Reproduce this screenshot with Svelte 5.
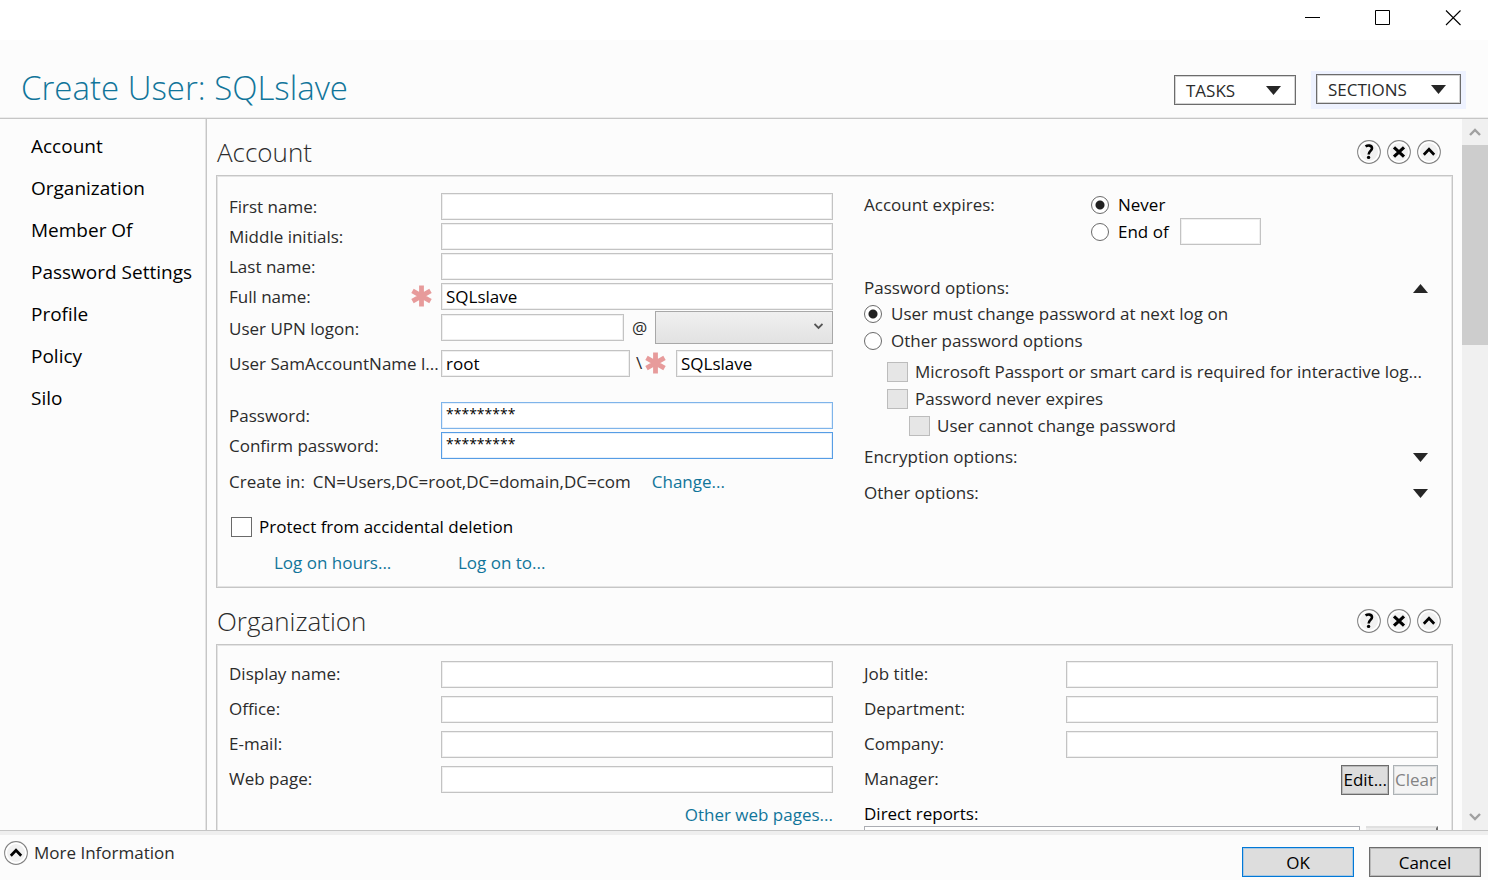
<script>
	const sections = ['Account', 'Organization', 'Member Of', 'Password Settings', 'Profile', 'Policy', 'Silo'];

	const nameFields = [
		{ id: 'first-name', label: 'First name:', value: '' },
		{ id: 'middle-initials', label: 'Middle initials:', value: '' },
		{ id: 'last-name', label: 'Last name:', value: '' },
		{ id: 'full-name', label: 'Full name:', value: 'SQLslave', required: true }
	];

	const passwordFields = [
		{ id: 'password', label: 'Password:' },
		{ id: 'confirm-password', label: 'Confirm password:', focused: true }
	];

	const orgLeft = ['Display name:', 'Office:', 'E-mail:', 'Web page:'];
	const orgRight = ['Job title:', 'Department:', 'Company:'];

	let expires = $state('never');
	let passwordMode = $state('change');
	let protect = $state(false);
</script>

{#snippet star()}
	<svg class="star" width="21" height="22" viewBox="0 0 21 22" aria-hidden="true">
		<path d="M10.5 0.5V21.5M1.5 5.8L19.5 16.2M19.5 5.8L1.5 16.2" stroke="#e79b9b" stroke-width="4.8" />
	</svg>
{/snippet}

{#snippet triangle(up)}
	<svg width="15" height="9" viewBox="0 0 15 9" aria-hidden="true">
		<path d={up ? 'M0 9L7.5 0L15 9Z' : 'M0 0H15L7.5 9Z'} fill="#262626" />
	</svg>
{/snippet}

{#snippet roundIcon(kind)}
	<svg width="24" height="24" viewBox="0 0 24 24" aria-hidden="true">
		<circle cx="12" cy="12" r="11.3" fill="#f1f1f1" stroke="#858585" stroke-width="1.2" />
		<circle cx="12" cy="12" r="9.8" fill="none" stroke="#fff" stroke-width="1.6" />
		{#if kind === 'help'}
			<path d="M8.6 6.6C10.6 5 15 5 15 8.3C15 10.8 11.7 11 11.7 14.4" fill="none" stroke="#000" stroke-width="2.6" />
			<circle cx="11.6" cy="17.4" r="1.7" />
		{:else if kind === 'close'}
			<path d="M7 7.3L17 16.7M17 7.3L7 16.7" stroke="#000" stroke-width="3.1" />
		{:else}
			<path d="M6.8 14.8L12 9.3L17.2 14.8" fill="none" stroke="#000" stroke-width="2.7" />
		{/if}
	</svg>
{/snippet}

{#snippet sectionHead(title)}
	<header class="section-head">
		<h2>{title}</h2>
		<div class="section-tools">
			<button class="round" aria-label="Help">{@render roundIcon('help')}</button>
			<button class="round" aria-label="Close {title}">{@render roundIcon('close')}</button>
			<button class="round" aria-label="Collapse {title}">{@render roundIcon('up')}</button>
		</div>
	</header>
{/snippet}

<div class="window">
	<div class="titlebar">
		<button aria-label="Minimize">
			<svg width="16" height="16" viewBox="0 0 16 16"><path d="M0 7.5H15" stroke="#000" /></svg>
		</button>
		<button aria-label="Maximize">
			<svg width="16" height="16" viewBox="0 0 16 16"><path d="M0.5 0.5H14.5V14.5H0.5Z" fill="none" stroke="#000" /></svg>
		</button>
		<button aria-label="Close">
			<svg width="16" height="16" viewBox="0 0 16 16"><path d="M1 0.5L15.5 15M15.5 0.5L1 15" stroke="#000" stroke-width="1.1" /></svg>
		</button>
	</div>

	<header class="page-head">
		<h1>Create User: SQLslave</h1>
		<button class="menu tasks">TASKS {@render triangle(false)}</button>
		<div class="halo">
			<button class="menu sections">SECTIONS {@render triangle(false)}</button>
		</div>
	</header>

	<div class="body">
		<nav>
			{#each sections as section}
				<a href="#{section}">{section}</a>
			{/each}
		</nav>

		<main>
			<section>
				{@render sectionHead('Account')}
				<div class="panel">
					<div class="column">
						{#each nameFields as field}
							<div class="row">
								<label for={field.id}>
									{field.label}
									{#if field.required}{@render star()}{/if}
								</label>
								<input class="text" type="text" id={field.id} value={field.value} />
							</div>
						{/each}
						<div class="row upn">
							<label for="upn">User UPN logon:</label>
							<input class="text" type="text" id="upn" />
							<span class="at">@</span>
							<div class="select">
								<select aria-label="UPN suffix"><option></option></select>
								<svg width="9" height="7" viewBox="0 0 9 7" aria-hidden="true">
									<path d="M0.5 1L4.5 5L8.5 1" fill="none" stroke="#555" stroke-width="1.8" />
								</svg>
							</div>
						</div>
						<div class="row sam">
							<label for="sam">User SamAccountName l...</label>
							<input class="text" type="text" id="sam" value="root" />
							<span class="slash">\</span>
							{@render star()}
							<input class="text sam-name" type="text" aria-label="SamAccountName" value="SQLslave" />
						</div>
						<div class="passwords">
							{#each passwordFields as field}
								<div class="row">
									<label for={field.id}>{field.label}</label>
									<input class="text secret" class:focused={field.focused} type="text" id={field.id} value="*********" />
								</div>
							{/each}
						</div>
						<div class="create-in">
							<span>Create in:</span>
							<span>CN=Users,DC=root,DC=domain,DC=com</span>
							<a href="#change">Change...</a>
						</div>
						<label class="choice protect">
							<input type="checkbox" bind:checked={protect} />
							Protect from accidental deletion
						</label>
						<div class="logon-links">
							<a href="#hours">Log on hours...</a>
							<a href="#computers">Log on to...</a>
						</div>
					</div>

					<div class="column">
						<div class="expires">
							<span>Account expires:</span>
							<div>
								<label class="choice dark">
									<input type="radio" name="expires" value="never" bind:group={expires} />
									Never
								</label>
								<div class="end-of">
									<label class="choice dark">
										<input type="radio" name="expires" value="end" bind:group={expires} />
										End of
									</label>
									<input class="text" type="text" aria-label="Expiry date" />
								</div>
							</div>
						</div>
						<button class="expander open">Password options: {@render triangle(true)}</button>
						<label class="choice">
							<input type="radio" name="mode" value="change" bind:group={passwordMode} />
							User must change password at next log on
						</label>
						<label class="choice">
							<input type="radio" name="mode" value="other" bind:group={passwordMode} />
							Other password options
						</label>
						<div class="other-options">
							<label class="choice">
								<input type="checkbox" disabled />
								Microsoft Passport or smart card is required for interactive log...
							</label>
							<label class="choice">
								<input type="checkbox" disabled />
								Password never expires
							</label>
							<label class="choice nested">
								<input type="checkbox" disabled />
								User cannot change password
							</label>
						</div>
						<button class="expander">Encryption options: {@render triangle(false)}</button>
						<button class="expander">Other options: {@render triangle(false)}</button>
					</div>
				</div>
			</section>

			<section>
				{@render sectionHead('Organization')}
				<div class="panel organization">
					<div class="column">
						{#each orgLeft as label, i}
							<div class="row">
								<label for="org-left-{i}">{label}</label>
								<input class="text" type="text" id="org-left-{i}" />
							</div>
						{/each}
						<div class="row web-pages"><a href="#pages">Other web pages...</a></div>
					</div>
					<div class="column">
						{#each orgRight as label, i}
							<div class="row">
								<label for="org-right-{i}">{label}</label>
								<input class="text" type="text" id="org-right-{i}" />
							</div>
						{/each}
						<div class="row manager">
							<span>Manager:</span>
							<button class="push">Edit...</button>
							<button class="push" disabled>Clear</button>
						</div>
						<p id="reports-label">Direct reports:</p>
						<div class="reports">
							<div class="list" role="listbox" tabindex="0" aria-labelledby="reports-label"></div>
							<button class="add" aria-label="Add report"></button>
						</div>
					</div>
				</div>
			</section>
		</main>

		<div class="scrollbar">
			<button aria-label="Scroll up">
				<svg width="12" height="8" viewBox="0 0 12 8"><path d="M1 7L6 2L11 7" fill="none" stroke="#a0a0a0" stroke-width="2.4" /></svg>
			</button>
			<div class="thumb"></div>
			<button aria-label="Scroll down">
				<svg width="12" height="8" viewBox="0 0 12 8"><path d="M1 1L6 6L11 1" fill="none" stroke="#a0a0a0" stroke-width="2.4" /></svg>
			</button>
		</div>
	</div>

	<footer>
		<button class="more">{@render roundIcon('up')} More Information</button>
		<div class="actions">
			<button class="push default">OK</button>
			<button class="push">Cancel</button>
		</div>
	</footer>
</div>

<style>
	:global(body) {
		margin: 0;
	}

	.window {
		height: 100vh;
		display: flex;
		flex-direction: column;
		background: #fcfcfc;
		color: #2b2b2b;
		font-family: "Segoe UI", "Open Sans", "Noto Sans", sans-serif;
		font-size: 17px;
		line-height: 24px;
		white-space: nowrap;
	}

	.window * {
		box-sizing: border-box;
	}

	button,
	input,
	select {
		font: inherit;
		color: inherit;
		margin: 0;
		outline: none;
	}

	button {
		padding: 0;
		border: 0;
		background: none;
	}

	svg {
		display: block;
		flex: none;
	}

	a {
		color: #11759a;
		text-decoration: none;
	}

	h1,
	h2,
	p {
		margin: 0;
		font-weight: 300;
	}

	/* Title bar and page heading */

	.titlebar {
		flex: none;
		height: 40px;
		display: flex;
		justify-content: flex-end;
		background: #fff;
	}

	.titlebar button {
		width: 70px;
		height: 36px;
		display: grid;
		place-items: center;
	}

	.page-head {
		flex: none;
		height: 79px;
		display: flex;
		align-items: center;
		padding: 22px 22px 0 21px;
		border-bottom: 1px solid #c6c6c6;
		box-shadow: inset 0 -1px #ececec;
	}

	h1 {
		flex: 1;
		padding-bottom: 4px;
		font-size: 33px;
		line-height: 48px;
		color: #11759a;
	}

	.menu {
		height: 30px;
		display: flex;
		align-items: center;
		justify-content: space-between;
		padding: 2px 14px 0 11px;
		border: 1px solid #6c6c6c;
		background: #fff;
		box-shadow: inset 0 0 0 1px #d4d4d4;
	}

	.menu svg {
		margin-bottom: 2px;
	}

	.tasks {
		width: 122px;
		margin-right: 15px;
	}

	.sections {
		width: 145px;
	}

	.halo {
		padding: 3px 5px 5px;
		background: #eef2ff;
	}

	/* Body */

	.body {
		flex: 1;
		min-height: 0;
		display: flex;
	}

	nav {
		flex: none;
		width: 207px;
		padding: 6px 0 0 31px;
		border-right: 1px solid #c6c6c6;
		box-shadow: inset -1px 0 #e4e4e4;
		font-size: 19px;
	}

	nav a {
		display: block;
		line-height: 42px;
		color: #000;
	}

	main {
		flex: 1;
		min-width: 0;
		overflow: hidden;
		padding: 0 9px;
	}

	.section-head {
		height: 56px;
		display: flex;
		align-items: center;
		justify-content: space-between;
		padding: 10px 12px 0 1px;
	}

	h2 {
		font-size: 26px;
		line-height: 36px;
	}

	.section-tools {
		display: flex;
		gap: 6px;
	}

	.round {
		border-radius: 50%;
	}

	.panel {
		display: grid;
		grid-template-columns: minmax(0, 604fr) minmax(0, 574fr);
		column-gap: 31px;
		padding: 15px 14px 12px 12px;
		border: 1px solid #c6c6c6;
		box-shadow: inset 0 0 0 1px #e4e4e4;
	}

	.row {
		height: 30px;
		display: flex;
		align-items: center;
	}

	.row label {
		flex: none;
		width: 212px;
		display: flex;
		justify-content: space-between;
		padding: 2px 9px 0 0;
	}

	.text {
		flex: 1;
		min-width: 0;
		width: 100%;
		height: 27px;
		padding: 0 4px;
		border: 1px solid #c3c3c3;
		background: #fff;
		color: #000;
		box-shadow: inset 0 0 0 1px #efefef;
	}

	.upn {
		height: 33px;
	}

	.at {
		flex: none;
		width: 31px;
		text-align: center;
	}

	.select {
		flex: none;
		width: 178px;
		position: relative;
	}

	select {
		display: block;
		width: 100%;
		height: 33px;
		appearance: none;
		border: 1px solid #a8a8a8;
		border-radius: 0;
		background: linear-gradient(#f0f0f0, #e2e2e2);
	}

	.select svg {
		position: absolute;
		right: 10px;
		top: 12px;
		pointer-events: none;
	}

	.sam {
		height: 38px;
	}

	.slash {
		flex: none;
		width: 15px;
		padding-left: 6px;
	}

	.sam .sam-name {
		flex: none;
		width: 157px;
		margin-left: 10px;
	}

	.passwords {
		padding-top: 18px;
	}

	.secret {
		padding-bottom: 4px;
		border-color: #7eb4ea;
		font-size: 14px;
		box-shadow: inset 0 0 0 1px #e6f0fb;
	}

	.secret.focused {
		border-color: #569de5;
	}

	.create-in {
		display: flex;
		gap: 8px;
		line-height: 44px;
	}

	.create-in a {
		padding-left: 13px;
	}

	.logon-links {
		display: grid;
		grid-template-columns: 184px 1fr;
		padding-left: 45px;
		line-height: 25px;
	}

	/* Radios and tick boxes */

	.choice {
		height: 27px;
		display: flex;
		align-items: center;
	}

	.choice input {
		appearance: none;
		flex: none;
		background: #fff;
		border: 1px solid #6a6a6a;
	}

	.choice input[type="radio"] {
		width: 18px;
		height: 18px;
		margin-right: 9px;
		border-radius: 50%;
	}

	.choice input[type="radio"]:checked {
		background: radial-gradient(circle, #212121 4px, #fff 5px);
	}

	.choice input[type="checkbox"] {
		width: 21px;
		height: 20px;
		margin-right: 7px;
	}

	.choice input[type="checkbox"]:checked {
		background: #212121;
	}

	.choice input:disabled {
		background: #e6e6e6;
		border-color: #bcbcbc;
	}

	.dark,
	.protect {
		color: #000;
	}

	.protect {
		height: 46px;
		padding-left: 2px;
	}

	.expires {
		display: grid;
		grid-template-columns: 227px 1fr;
		line-height: 28px;
	}

	.end-of {
		display: flex;
		gap: 11px;
	}

	.end-of .text {
		flex: none;
		width: 81px;
	}

	.expander {
		width: 100%;
		height: 36px;
		display: flex;
		align-items: center;
		justify-content: space-between;
		padding-right: 10px;
	}

	.expander.open {
		height: 24px;
		margin-top: 31px;
	}

	.other-options {
		padding: 4px 0 0 23px;
	}

	.nested {
		padding-left: 22px;
	}

	/* Organization */

	.organization {
		padding-top: 12px;
	}

	.organization .row {
		height: 35px;
	}

	.organization label {
		padding: 0 0 2px;
	}

	.organization .column:last-child label {
		width: 202px;
	}

	.web-pages {
		justify-content: flex-end;
	}

	.manager {
		gap: 4px;
	}

	.manager span {
		flex: 1;
		padding-bottom: 2px;
	}

	.push {
		height: 30px;
		padding: 0 1px;
		border: 1px solid #6c6c6c;
		background: #dddddd;
		color: #000;
		box-shadow: inset 0 0 0 1px #b9b9b9;
	}

	.push:disabled {
		border-color: #adb2b5;
		background: #f4f4f4;
		color: #838383;
		box-shadow: inset 0 0 0 1px #dfe1e2;
	}

	p {
		padding: 5px 0 0;
		font-weight: 400;
		color: #000;
	}

	.reports {
		display: flex;
		gap: 6px;
	}

	.list {
		flex: 1;
		height: 120px;
		border: 1px solid #abadb3;
		background: #fff;
	}

	.add {
		width: 72px;
		height: 30px;
		border-top: 2px solid #e0e0e0;
		border-right: 2px solid #707070;
		background: #ececec;
	}

	/* Scroll bar */

	.scrollbar {
		flex: none;
		width: 26px;
		display: flex;
		flex-direction: column;
		background: #f0f0f0;
	}

	.scrollbar button {
		height: 26px;
		display: grid;
		place-items: center;
	}

	.scrollbar button:last-child {
		margin-top: auto;
	}

	.thumb {
		height: 200px;
		background: #cdcdcd;
	}

	/* Footer */

	footer {
		flex: none;
		height: 50px;
		display: flex;
		align-items: flex-start;
		justify-content: space-between;
		padding: 0 7px 0 4px;
		border-top: 1px solid #c6c6c6;
		box-shadow: inset 0 4px #efefef;
	}

	.more {
		display: flex;
		align-items: center;
		gap: 6px;
		padding-top: 10px;
	}

	.actions {
		display: flex;
		gap: 15px;
		padding-top: 16px;
	}

	.actions .push {
		width: 112px;
		padding-top: 2px;
	}

	.actions .default {
		border-color: #0078d7;
		box-shadow: inset 0 0 0 1px #a9c8e2;
	}
</style>
